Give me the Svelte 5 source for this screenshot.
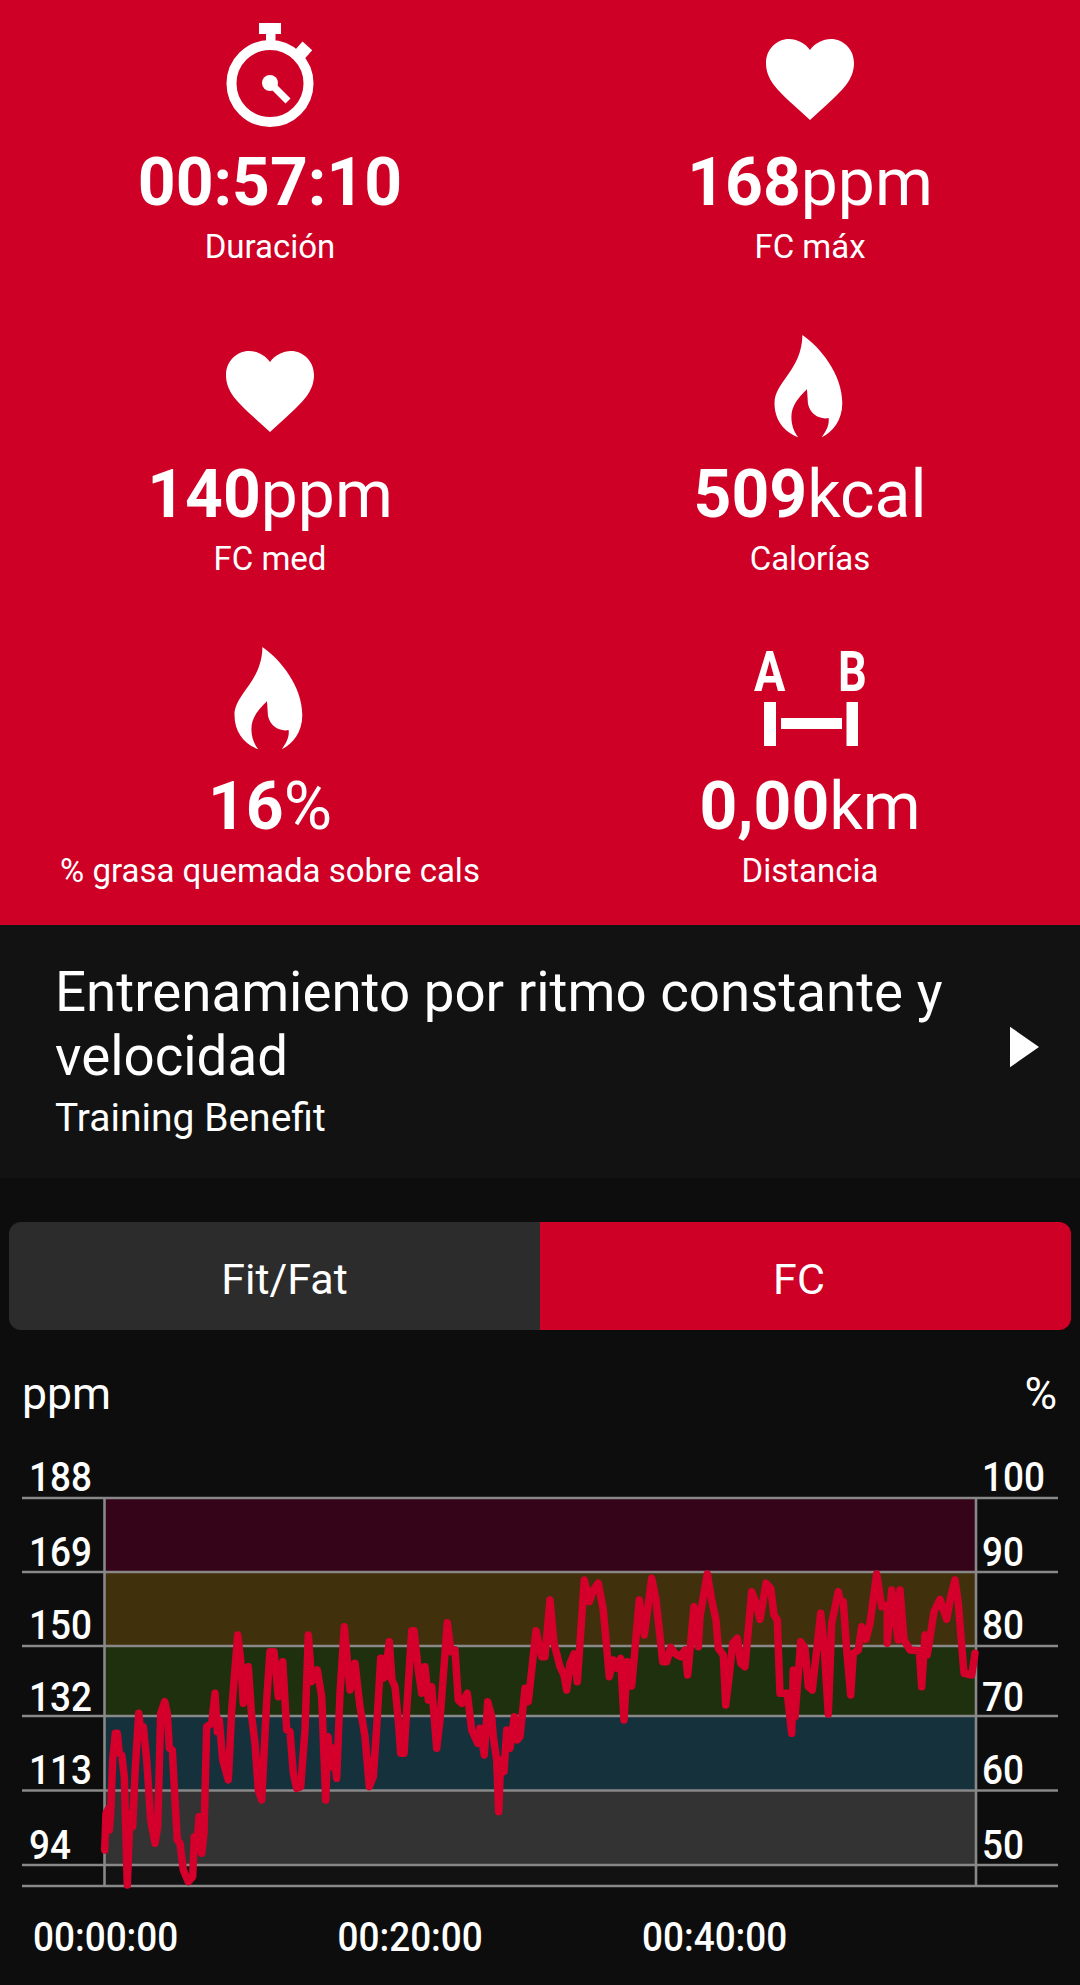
<script>
  const a = [[44,870],[48,760],[56,745],[58,810],[62,760],[68,600],[76,520],[82,520],[88,580],[95,585],[103,650],[112,975],[120,760],[128,800],[135,640],[146,460],[152,510],[160,500],[170,600],[182,780],[195,850],[203,800],[212,460],[224,425],[232,460],[238,565],[247,570],[255,720],[262,840],[270,850],[280,930],[295,965],[308,950],[313,830],[320,870],[327,770],[335,880],[342,820],[350,500],[365,490],[375,400],[382,515],[388,480],[398,600],[415,660],[425,450],[443,225],[452,300],[460,430],[475,320],[485,470],[495,550],[505,690],[515,720],[530,420],[540,275],[552,275],[565,410],[578,305],[590,510],[600,515],[610,640],[620,685],[632,680],[645,510],[655,225],[665,365],[682,330],[695,410],[707,720],[714,530],[722,620],[730,565],[740,655],[750,400],[763,200],[780,390],[795,310],[810,440],[825,530],[838,680],[850,650],[860,500],[872,295],[880,355],[893,345]];
  const b = [[5,295],[15,350],[28,245],[36,360],[45,380],[55,480],[62,580],[72,580],[80,450],[95,212],[102,212],[115,330],[125,400],[135,320],[145,420],[155,380],[170,565],[180,480],[202,188],[213,275],[225,270],[235,420],[245,430],[262,400],[275,510],[293,550],[300,505],[313,585],[323,425],[335,470],[340,530],[350,600],[356,755],[362,600],[372,635],[380,510],[390,565],[403,470],[412,540],[420,530],[435,385],[445,425],[468,212],[485,290],[495,290],[510,120],[522,250],[540,320],[552,345],[560,390],[570,310],[582,282],[592,365],[613,60],[628,125],[640,90],[655,70],[670,150],[688,350],[700,300],[712,325],[722,295],[732,480],[742,305],[755,378],[778,120],[793,225],[815,55],[828,120],[838,210],[848,305],[860,305],[872,262],[885,280],[900,290]];
  const c = [[15,270],[23,345],[42,140],[55,260],[60,170],[82,42],[95,120],[108,180],[115,265],[130,285],[137,435],[148,345],[158,250],[172,235],[182,310],[195,320],[215,95],[228,130],[240,178],[258,70],[272,85],[282,165],[292,180],[300,400],[322,400],[335,520],[340,330],[345,470],[362,245],[375,265],[385,380],[397,390],[422,160],[432,255],[445,462],[455,190],[475,95],[480,120],[490,125],[500,270],[512,405],[520,280],[535,270],[545,200],[558,238],[570,190],[590,42],[605,140],[622,135],[622,250],[635,90],[645,170],[655,240],[660,90],[672,240],[690,270],[718,272],[725,380],[735,225],[742,285],[762,155],[780,118],[800,178],[812,110],[825,60],[835,130],[852,340],[875,345],[885,280]];
  const conv = (arr, ox) => arr.map(([x, y]) => `${(ox + x / 3).toFixed(1)},${(1560 + y / 3).toFixed(1)}`);
  const curve = [...conv(a, 90), ...conv(b, 380), ...conv(c, 680)].join(' ');

  const bands = [
    { y: 1498, h: 74, fill: '#350418' },
    { y: 1572, h: 74, fill: '#40300c' },
    { y: 1646, h: 70, fill: '#1e300e' },
    { y: 1716, h: 74, fill: '#15313c' },
    { y: 1790, h: 75, fill: '#333333' },
    { y: 1865, h: 21, fill: '#121212' }
  ];
  const grid = [1498, 1572, 1646, 1716, 1790.5, 1865, 1886];
  const left = [['188', 1490.5], ['169', 1565.5], ['150', 1639], ['132', 1710.5], ['113', 1784], ['94', 1859]];
  const right = [['100', 1490.5], ['90', 1565.5], ['80', 1639], ['70', 1710.5], ['60', 1784], ['50', 1859]];
  const times = [['00:00:00', 33], ['00:20:00', 337.5], ['00:40:00', 642]];

  const stats = [
    { icon: 'watch', value: '00:57:10', unit: '', label: 'Duración' },
    { icon: 'heart', value: '168', unit: 'ppm', label: 'FC máx' },
    { icon: 'heart', value: '140', unit: 'ppm', label: 'FC med' },
    { icon: 'flame', value: '509', unit: 'kcal', label: 'Calorías' },
    { icon: 'flame', value: '16', unit: '%', label: '% grasa quemada sobre cals' },
    { icon: 'ab', value: '0,00', unit: 'km', label: 'Distancia' }
  ];
</script>

<div class="page">
  <section class="stats">
    {#each stats as s}
      <div class="stat">
        <svg class="icon" viewBox="0 0 120 110" aria-hidden="true">
          {#if s.icon === 'watch'}
            <circle cx="60" cy="63.5" r="38.5" fill="none" stroke="#fff" stroke-width="10" />
            <rect x="49" y="3" width="22" height="11" fill="#fff" />
            <rect x="56" y="13" width="9.5" height="12" fill="#fff" />
            <rect x="87" y="24" width="13" height="11" fill="#fff" transform="rotate(42 93 30)" />
            <circle cx="60" cy="63" r="8" fill="#fff" />
            <line x1="60" y1="63" x2="78" y2="81" stroke="#fff" stroke-width="7" />
          {:else if s.icon === 'heart'}
            <path fill="#fff" d="M60 100 L43 84.5 C28 70.5 16 60 16 43 C16 29 27 19 39 19 C47 19 55 23 60 30 C65 23 73 19 81 19 C93 19 104 29 104 43 C104 60 92 70.5 77 84.5Z" />
          {:else if s.icon === 'flame'}
            <path fill="#fff" d="M52.4 3 C70 15 92.3 42 92.3 71 C92.3 88 83 100 71.7 105.3 C77 98 79.5 92 78.6 86 C70 88 60 82 58 72 C57.5 66 57.5 62 56.9 57.3 C48 66 41.4 74 41.4 85 C41.4 93 44 100 48.3 105.3 C34 100 24.5 88 24.5 71 C24.5 50 52 38 52.4 3Z" />
          {:else}
            <text class="ab" transform="translate(4 47) scale(.85 1)">A</text>
            <text class="ab" transform="translate(88 47) scale(.82 1)">B</text>
            <rect x="14" y="58" width="12" height="44" fill="#fff" />
            <rect x="96.5" y="58" width="11.5" height="44" fill="#fff" />
            <rect x="31" y="74" width="61" height="11" fill="#fff" />
          {/if}
        </svg>
        <div class="value"><b>{s.value}</b>{s.unit}</div>
        <div class="label">{s.label}</div>
      </div>
    {/each}
  </section>

  <section class="benefit">
    <div class="benefit-text">
      <div class="title">Entrenamiento por ritmo constante y velocidad</div>
      <div class="sub">Training Benefit</div>
    </div>
    <svg class="play" viewBox="0 0 30 42" aria-hidden="true"><polygon points="0,0 30,21 0,42" fill="#fff" /></svg>
  </section>

  <section class="tabs">
    <div class="tab off">Fit/Fat</div>
    <div class="tab on">FC</div>
  </section>

  <svg class="chart" viewBox="0 1330 1080 655" role="img" aria-label="FC">
    {#each bands as z}
      <rect x="104" y={z.y} width="872" height={z.h} fill={z.fill} />
    {/each}
    {#each grid as y}
      <line x1="22" x2="1058" y1={y} y2={y} stroke="#888" stroke-width="2.4" />
    {/each}
    <line x1="104.5" x2="104.5" y1="1498" y2="1886" stroke="#888" stroke-width="2.6" />
    <line x1="976" x2="976" y1="1498" y2="1886" stroke="#888" stroke-width="2.6" />
    <polyline points={curve} fill="none" stroke="#d4002b" stroke-width="7.5" stroke-linejoin="round" stroke-linecap="round" />
    <text class="unit" x="22" y="1409">ppm</text>
    <text class="unit" x="1057" y="1409" text-anchor="end">%</text>
    {#each left as [t, y]}
      <text class="tick" transform="translate(29 {y}) scale(.9 1)">{t}</text>
    {/each}
    {#each right as [t, y]}
      <text class="tick" transform="translate(982 {y}) scale(.9 1)">{t}</text>
    {/each}
    {#each times as [t, x]}
      <text class="tick" transform="translate({x} 1950.5) scale(.9 1)">{t}</text>
    {/each}
  </svg>
</div>

<style>
  :global(body) {
    margin: 0;
    background: #0d0d0d;
  }
  .page {
    width: 1080px;
    height: 1985px;
    overflow: hidden;
    font-family: Roboto, "Liberation Sans", sans-serif;
    color: #fff;
    background: #0d0d0d;
  }
  .stats {
    display: grid;
    grid-template-columns: 540px 540px;
    grid-auto-rows: 312px;
    height: 925px;
    background: #ce0026;
  }
  .stat {
    display: flex;
    flex-direction: column;
    align-items: center;
    padding-top: 20px;
  }
  .icon {
    width: 120px;
    height: 110px;
    display: block;
    overflow: visible;
  }
  .ab {
    font: 700 55px Roboto, sans-serif;
    fill: #fff;
  }
  .value {
    font-size: 66px;
    line-height: 78px;
    margin-top: 14px;
    white-space: nowrap;
  }
  .value b {
    font-weight: 700;
  }
  .label {
    font-size: 33px;
    line-height: 38px;
    margin-top: 6px;
    white-space: nowrap;
  }
  .benefit {
    height: 253px;
    box-sizing: border-box;
    background: #121212;
    display: flex;
    align-items: center;
    padding: 36px 40px 36px 55px;
  }
  .benefit-text {
    flex: 1;
  }
  .title {
    font-size: 54.7px;
    line-height: 63.5px;
    width: 940px;
  }
  .sub {
    font-size: 39px;
    line-height: 48px;
    margin-top: 6px;
  }
  .play {
    width: 29px;
    height: 42px;
    margin-bottom: 10px;
    margin-right: 1px;
  }
  .tabs {
    display: flex;
    margin: 44px 9px 0;
    height: 108px;
    border-radius: 12px;
    overflow: hidden;
  }
  .tab {
    display: flex;
    align-items: center;
    justify-content: center;
    font-size: 43px;
    padding-top: 5px;
    box-sizing: border-box;
  }
  .off {
    width: 531px;
    padding-left: 20px;
    background: #2c2c2c;
  }
  .on {
    flex: 1;
    padding-right: 13px;
    background: #ce0026;
  }
  .chart {
    display: block;
    width: 1080px;
    height: 655px;
  }
  .unit {
    font: 400 44.5px Roboto, sans-serif;
    fill: #fff;
  }
  .tick {
    font: 500 41px Roboto, sans-serif;
    fill: #fff;
  }
</style>
